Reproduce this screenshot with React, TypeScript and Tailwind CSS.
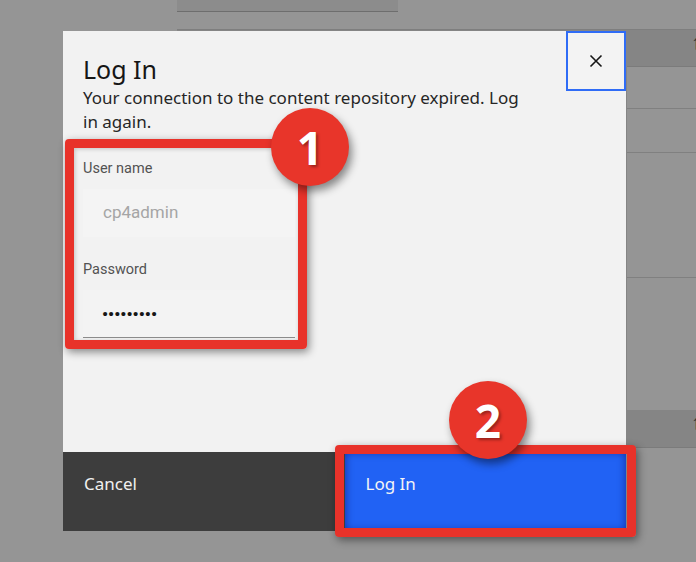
import React from "react";

function Badge({ n, className }: { n: string; className: string }) {
  return (
    <div
      className={`absolute w-[78px] h-[78px] rounded-full bg-[#e8352a] flex items-center justify-center shadow-[3px_5px_8px_rgba(0,0,0,0.45)] ${className}`}
    >
      <span
        className="text-white font-bold text-[46px] leading-none [text-shadow:2px_2px_3px_rgba(0,0,0,0.35)]"
        style={{ fontFamily: '"Open Sans", "Liberation Sans", sans-serif' }}
      >
        {n}
      </span>
    </div>
  );
}

export default function App() {
  return (
    <div
      className="relative w-[696px] h-[562px] overflow-hidden bg-[#959595]"
      style={{ fontFamily: 'Roboto, "Liberation Sans", sans-serif' }}
    >
      {/* background page */}
      <div className="flex flex-col pl-[177px]">
        <div className="w-[221px] h-[12px] bg-[#8c8c8c] border-b border-[#6e6e6e]" />
        <div className="h-[17px]" />
        <div className="flex flex-col border-t border-[#7e7e7e]">
          <div className="h-[37px] bg-[#858585] border-b border-[#7b7b7b] flex justify-end items-start pt-[2px]">
            <span className="text-[#333] text-[20px] leading-none translate-x-[5px]">↑</span>
          </div>
          <div className="h-[42px] border-b border-[#808080]" />
          <div className="h-[44px] border-b border-[#808080]" />
          <div className="h-[125px] border-b border-[#808080]" />
          <div className="h-[132px]" />
          <div className="h-[38px] bg-[#858585] border-b border-[#7b7b7b] flex justify-end items-start pt-[2px]">
            <span className="text-[#333] text-[20px] leading-none translate-x-[5px]">↑</span>
          </div>
        </div>
      </div>

      {/* modal */}
      <div className="absolute left-[63px] top-[31px] w-[563px] h-[500px] bg-[#f2f2f2] flex flex-col shadow-[1px_0_0_#858585]">
        <div
          className="h-[421px] pl-[20px] pt-[22px] flex flex-col"
          style={{ fontFamily: '"Noto Sans", "Liberation Sans", sans-serif' }}
        >
          <h1 className="text-[25px] leading-[32px] text-[#161616] font-normal">Log In</h1>
          <p className="mt-[1px] text-[17px] leading-[24px] text-[#262626]">
            Your connection to the content repository expired. Log
            <br />
            in again.
          </p>
          <div className="mt-[26px] w-[212px] flex flex-col" style={{ fontFamily: 'Roboto, "Liberation Sans", sans-serif' }}>
            <label className="text-[14.5px] leading-[18px] text-[#525252]">User name</label>
            <div className="mt-[11px] h-[48px] bg-[#f4f4f4] pl-[20px] flex items-center text-[17px] text-[#a5a5a5]">
              cp4admin
            </div>
            <label className="mt-[24px] text-[14.5px] leading-[18px] text-[#525252]">Password</label>
            <div className="mt-[11px] h-[48px] bg-[#f3f3f3] pl-[19px] pt-[3px] flex items-center border-b border-[#8d8d8d] text-[17px] font-bold tracking-[0px] text-[#161616]">
              •••••••••
            </div>
          </div>
        </div>
        <div
          className="h-[79px] grid grid-cols-2 text-[17px]"
          style={{ fontFamily: '"Noto Sans", "Liberation Sans", sans-serif' }}
        >
          <div className="bg-[#3d3d3d] text-[#f0f0f0] pl-[21px] pt-[20px] leading-[24px]">Cancel</div>
          <div className="bg-[#2162f4] text-[#f4f4f4] pl-[21px] pt-[20px] leading-[24px] shadow-[inset_0_0_8px_rgba(0,0,80,0.55)]">
            Log In
          </div>
        </div>
        <button className="absolute left-[503px] top-0 w-[60px] h-[60px] border-2 border-[#2f6cf6] flex items-center justify-center bg-[#f3f3f3]">
          <svg width="14" height="14" viewBox="0 0 14 14">
            <path d="M1.5 1.5 L12.5 12.5 M12.5 1.5 L1.5 12.5" stroke="#161616" strokeWidth="1.6" />
          </svg>
        </button>
      </div>

      {/* annotations */}
      <div className="absolute left-[65px] top-[139px] w-[242px] h-[210px] border-[9px] border-[#e8322a] rounded-[4px] shadow-[2px_3px_8px_rgba(0,0,0,0.45),inset_1px_1px_4px_rgba(0,0,0,0.2)]" />
      <div className="absolute left-[335px] top-[445px] w-[301px] h-[92px] border-[9px] border-[#e8322a] rounded-[4px] shadow-[2px_3px_8px_rgba(0,0,0,0.45)]" />
      <Badge n="1" className="left-[271px] top-[108px]" />
      <Badge n="2" className="left-[449px] top-[381px]" />
    </div>
  );
}
